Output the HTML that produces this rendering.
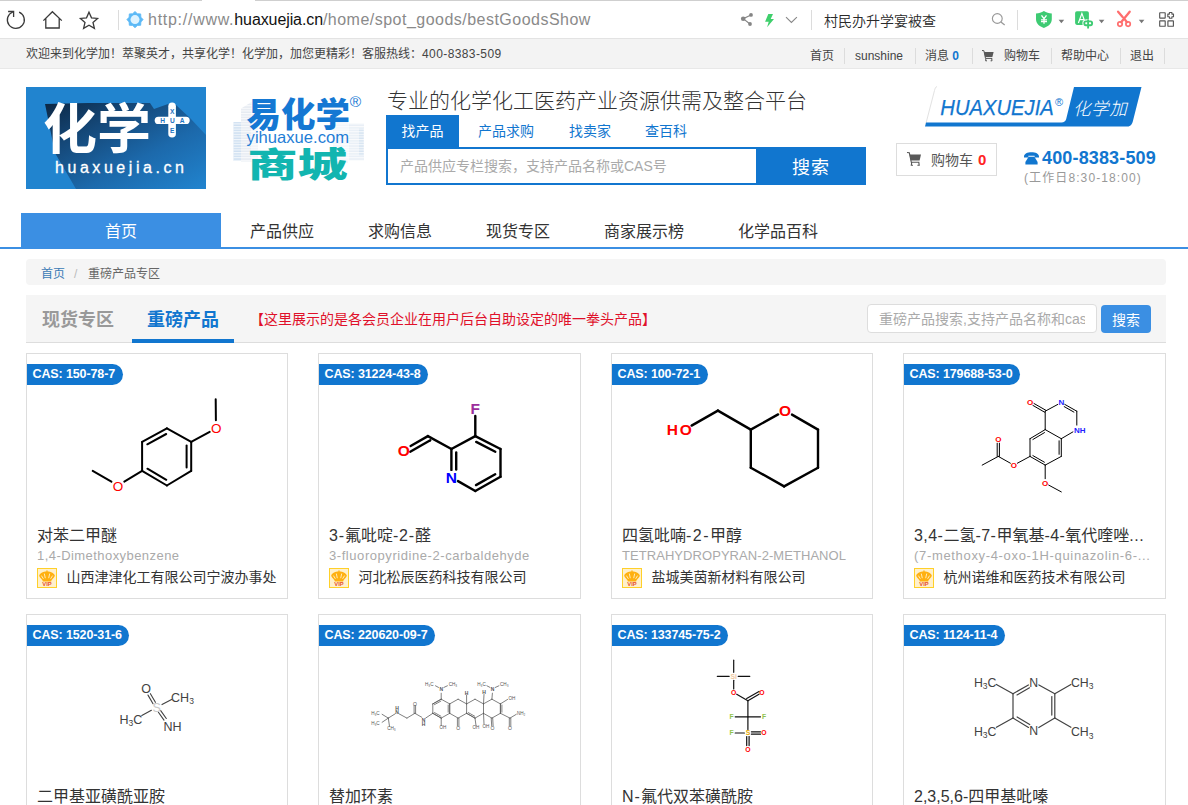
<!DOCTYPE html>
<html lang="zh-CN">
<head>
<meta charset="utf-8">
<title>重磅产品专区 - 化学加</title>
<style>
*{box-sizing:border-box;margin:0;padding:0}
html,body{width:1188px;height:805px;overflow:hidden;background:#fff}
body{font-family:"Liberation Sans","Noto Sans CJK SC",sans-serif;color:#333;font-size:12px;position:relative}
.abs{position:absolute;white-space:nowrap}
.cjk{font-family:"Noto Sans CJK SC","Liberation Sans",sans-serif}
a{color:inherit;text-decoration:none}
/* browser chrome */
#chrome{position:absolute;left:0;top:0;width:1188px;height:39px;background:#fff;border-bottom:1px solid #e3e3e3}
#chrome .topline{position:absolute;left:0;top:0;height:1px;background:#cfcfcf}
#chrome .vsep{position:absolute;top:10px;width:1px;height:20px;background:#dcdcdc}
#url{left:148px;top:9px;font-size:16px;line-height:22px;color:#8a8a8a;letter-spacing:0}
#url b{font-weight:normal;color:#111}
/* top bar */
#topbar{position:absolute;left:0;top:39px;width:1188px;height:30px;background:#f3f3f3;border-bottom:1px solid #e8e8e8}
#topbar .t{position:absolute;top:0;line-height:30px;font-size:12px;color:#444;white-space:nowrap}
#topbar .s{position:absolute;top:9px;width:1px;height:16px;background:#dcdcdc}
/* header */
#logo1{position:absolute;left:26px;top:87px;width:180px;height:102px;background:#2184cf;overflow:hidden}
#logo2{position:absolute;left:230px;top:87px;width:140px;height:102px;overflow:hidden}
#slogan{left:387px;top:84px;font-size:21px;line-height:30px;color:#333;font-weight:300}
.stab{position:absolute;top:115px;height:32px;line-height:32px;font-size:14px;color:#1176cf;white-space:nowrap}
#sbox{position:absolute;left:386px;top:147px;width:480px;height:38px;border:2px solid #1176cf;background:#fff}
#sbtn{position:absolute;left:756px;top:147px;width:110px;height:38px;background:#1176cf;color:#fff;font-size:18px;line-height:38px;text-align:center;letter-spacing:1px;padding-left:0px}
#cart{position:absolute;left:896px;top:143px;width:101px;height:33px;border:1px solid #ddd;background:#fff}
/* nav */
#nav{position:absolute;left:0;top:213px;width:1188px;height:36px;border-bottom:2px solid #3b8fe3}
#nav .home{position:absolute;left:21px;top:0;width:200px;height:34px;background:#3b8fe3;color:#fff;text-align:center;line-height:35px;font-size:16px}
#nav .it{position:absolute;top:0;line-height:34px;font-size:16px;color:#333;white-space:nowrap}
/* breadcrumb */
#bc{position:absolute;left:26px;top:259px;width:1140px;height:26px;background:#f5f5f5;border-radius:4px}
#bc span{position:absolute;top:0;line-height:30px;font-size:12px;white-space:nowrap}
/* tabs row */
#tabs{position:absolute;left:26px;top:295px;width:1140px;height:48px;background:#f5f5f5;border-bottom:1px solid #ddd}
#tabs .tb{position:absolute;top:0;line-height:46px;font-size:18px;font-weight:bold;white-space:nowrap}
/* cards */
.card{position:absolute;width:262px;height:246px;border:1px solid #ddd;background:#fff}
.cas{position:absolute;left:0;top:10px;height:21px;line-height:21px;padding:0 7.5px 0 5.5px;background:#1176cf;color:#fff;font-size:12.500px;font-weight:bold;letter-spacing:-.12px;border-radius:0 11px 11px 0;white-space:nowrap}
.card .tt{position:absolute;left:10px;top:170px;font-size:16px;line-height:24px;color:#333;white-space:nowrap}
.card .en{position:absolute;left:10px;top:193px;font-size:13px;line-height:18px;color:#aaa;white-space:nowrap}
.card .co{position:absolute;left:39.500px;top:213px;font-size:14px;line-height:20px;color:#333;white-space:nowrap}
.vip{position:absolute;left:10px;top:214px;width:20px;height:20px;background:#fff0cc;border:1px solid #ffd029}
svg{position:absolute;overflow:visible}
svg text{font-family:"Liberation Sans","Noto Sans CJK SC",sans-serif}
</style>
</head>
<body>
<!-- ===== browser chrome ===== -->
<div id="chrome">
  <div class="topline" style="left:0;width:202px"></div>
  <div class="topline" style="left:255px;width:933px"></div>
  <svg width="1188" height="39" style="left:0;top:0" viewBox="0 0 1188 39" fill="none">
    <!-- refresh -->
    <path d="M19.100 12.100 A8.500 8.500 0 1 1 12.800 12" stroke="#3a3a3a" stroke-width="1.300"/>
    <path d="M8.100 11.500 H13.600 V16.900" stroke="#3a3a3a" stroke-width="1.300"/>
    <!-- home -->
    <path d="M43.400 20.600 L52.400 11.700 L61.800 20.600 M45.800 18.600 V28 H59.200 V18.600" stroke="#3a3a3a" stroke-width="1.300" stroke-linejoin="miter"/>
    <!-- star -->
    <path d="M89 12.2 L91.5 17.8 L97.6 18.4 L93 22.5 L94.4 28.4 L89 25.3 L83.6 28.4 L85 22.5 L80.4 18.4 L86.5 17.8 Z" stroke="#3a3a3a" stroke-width="1.300" stroke-linejoin="miter"/>
    <!-- favicon -->
    <polygon points="135.0,11.5 137.4,13.7 140.7,13.9 140.9,17.2 143.1,19.6 140.9,22.0 140.7,25.3 137.4,25.5 135.0,27.7 132.6,25.5 129.3,25.3 129.1,22.0 126.9,19.6 129.1,17.2 129.3,13.9 132.6,13.7" fill="#5cb9f6" stroke="#5cb9f6" stroke-width=".8" stroke-linejoin="round"/>
    <circle cx="135" cy="19.600" r="4.500" fill="#def3ff"/>
    <!-- share -->
    <g fill="#858585"><circle cx="751" cy="14.900" r="1.900"/><circle cx="743.200" cy="18.700" r="2.300"/><circle cx="750" cy="24" r="1.900"/></g>
    <path d="M751 14.900 L743.200 18.700 L750 24" stroke="#858585" stroke-width="1.100"/>
    <!-- lightning -->
    <path d="M768.300 14.100 H773 L770.700 19.100 H774 L767.100 27.200 L768.700 21.800 H765.100 Z" fill="#3fcf6c"/>
    <!-- chevron -->
    <path d="M786 17.100 L791.400 22.500 L796.900 17.100" stroke="#888" stroke-width="1.100"/>
    <!-- magnifier -->
    <circle cx="997.300" cy="18.500" r="4.900" stroke="#999" stroke-width="1.150"/>
    <path d="M1000.900 22 L1004.700 25" stroke="#999" stroke-width="1.300"/>
    <!-- shield -->
    <path d="M1043.900 11 C1046.300 12.400 1049 13.300 1051.800 13.600 V19.200 C1051.800 23.600 1048.300 26.300 1043.900 27.900 C1039.500 26.300 1036 23.600 1036 19.200 V13.600 C1038.800 13.300 1041.500 12.400 1043.900 11 Z" fill="#3ecb73"/>
    <path d="M1041.500 15.400 L1044 18.700 L1046.500 15.400 M1044 18.700 V23.800 M1041 19.900 H1047 M1041 21.700 H1047" stroke="#fff" stroke-width="1.300"/>
    <path d="M1058.6 19.8 H1064.2 L1061.4 23.2 Z" fill="#777"/>
    <!-- translate -->
    <rect x="1075.100" y="11.200" width="13.800" height="13.700" rx="1.800" fill="#3ecb73"/>
    <path d="M1078.400 23 L1081.900 13.400 L1084.400 20.400 M1079.600 19.700 H1084" stroke="#fff" stroke-width="1.200"/>
    <g stroke="#fff" stroke-width="3.800"><rect x="1084.300" y="21.400" width="7.800" height="3.800" rx="1.600"/><path d="M1088.100 19.600 V28.400"/></g>
    <g stroke="#3ecb73" stroke-width="1.900"><rect x="1084.300" y="21.400" width="7.800" height="3.800" rx="1.600" fill="#fff"/><path d="M1088.100 19.500 V28.500"/></g>
    <path d="M1098.8 19.8 H1104.4 L1101.6 23.2 Z" fill="#777"/>
    <!-- scissors -->
    <path d="M1118.100 11.700 L1122.600 17 M1124.800 19.400 L1127 22.200 M1129.700 11.700 L1121.100 22.200" stroke="#ff6e6e" stroke-width="2.300" stroke-linecap="round"/>
    <circle cx="1120" cy="24.100" r="2.200" stroke="#ff6e6e" stroke-width="1.700"/>
    <circle cx="1128.100" cy="24.100" r="2.200" stroke="#ff6e6e" stroke-width="1.700"/>
    <path d="M1138.800 19.8 H1144.400 L1141.600 23.2 Z" fill="#777"/>
    <!-- grid -->
    <g stroke="#555" stroke-width="1.150">
      <rect x="1159.700" y="12.700" width="5.500" height="5.400" rx=".3"/>
      <rect x="1159.700" y="20.900" width="5.500" height="5.300" rx=".3"/>
      <rect x="1167.900" y="20.900" width="5.500" height="5.300" rx=".3"/>
      <path d="M1169.400 12.500 H1171.900 V14.100 H1173.500 V16.700 H1171.900 V18.300 H1169.400 V16.700 H1167.800 V14.100 H1169.400 Z" stroke-width="1.100" stroke-linejoin="round"/>
    </g>
  </svg>
  <div class="vsep" style="left:118px"></div>
  <div class="vsep" style="left:811px"></div>
  <div class="vsep" style="left:1017px"></div>
  <div class="abs" id="url"><span style="letter-spacing:.73px">http://www.</span><b style="letter-spacing:-.1px">huaxuejia.cn</b><span style="letter-spacing:.48px">/home/spot_goods/bestGoodsShow</span></div>
  <div class="abs cjk" style="left:824px;top:8.500px;font-size:14px;line-height:22px;color:#2a2a2a;font-weight:350">村民办升学宴被查</div>
</div>
<!-- ===== top bar ===== -->
<div id="topbar">
  <div class="t" style="left:26px">欢迎来到化学加！萃聚英才，共享化学！化学加，加您更精彩！客服热线：<span style="letter-spacing:.4px">400-8383-509</span></div>
  <div class="t" style="left:810px;line-height:34px">首页</div><div class="s" style="left:844px"></div>
  <div class="t" style="left:855px;line-height:34px">sunshine</div><div class="s" style="left:915px"></div>
  <div class="t" style="left:925px;line-height:34px">消息 <b style="color:#1176cf">0</b></div><div class="s" style="left:972px"></div>
  <svg width="13" height="12" style="left:982px;top:11px" viewBox="0 0 13 12"><path d="M0 .5 L1.900 .700 L3.500 8.400 H10.200 M3.900 8.400 L3.600 10.800 H5 M9.700 8.400 L10 10.800 H8.600" fill="none" stroke="#555" stroke-width="1"/><path d="M2.100 2 H11.600 L10.400 7 H3.200 Z" fill="#595959"/></svg>
  <div class="t" style="left:1004px;line-height:34px">购物车</div><div class="s" style="left:1051px"></div>
  <div class="t" style="left:1061px;line-height:34px">帮助中心</div><div class="s" style="left:1120px"></div>
  <div class="t" style="left:1130px;line-height:34px">退出</div><div class="s" style="left:1164px"></div>
</div>
<!-- ===== header ===== -->
<div id="logo1">
  <svg width="180" height="102" style="left:0;top:0" viewBox="0 0 180 102">
    <defs><linearGradient id="sh" x1="0" y1="0" x2="1" y2="1"><stop offset="0" stop-color="#0c2744"/><stop offset=".3" stop-color="#15497a"/><stop offset=".62" stop-color="#1c69ab"/><stop offset="1" stop-color="#2184cf"/></linearGradient></defs>
    <path d="M19 17 L62 16 L124 16 L128 22 L142 17 L150 18 L164 31 L180 48 V102 H50 L29 66 Z" fill="url(#sh)"/>
    <text x="17" y="62" font-size="54" font-weight="700" fill="#fff" style="font-family:'Noto Sans CJK SC','Liberation Sans',sans-serif" textLength="108" lengthAdjust="spacingAndGlyphs">化学</text>
    <rect x="128.700" y="29.700" width="35" height="7.400" rx="3.700" fill="#fff"/>
    <rect x="142.300" y="15.500" width="7.600" height="35" rx="3.800" fill="#fff"/>
    <text x="148.800" y="35.900" font-size="6.600" font-weight="bold" fill="#1f74c0" text-anchor="middle" letter-spacing="5">HUA</text>
    <text x="146.100" y="26.500" font-size="6.600" font-weight="bold" fill="#1f74c0" text-anchor="middle">X</text>
    <text x="146.100" y="46.300" font-size="6.600" font-weight="bold" fill="#1f74c0" text-anchor="middle">E</text>
    <text x="29" y="86.300" font-size="16" fill="#fff" letter-spacing="3.550" stroke="#fff" stroke-width=".3">huaxuejia.cn</text>
  </svg>
</div>
<div id="logo2">
  <svg width="140" height="102" style="left:0;top:0" viewBox="0 0 140 102">
    <defs><pattern id="fl" width="4" height="2.600" patternUnits="userSpaceOnUse"><rect width="4" height="1.100" fill="#fff" opacity=".75"/></pattern></defs>
    <g>
      <rect x="3.500" y="35" width="7.500" height="39" fill="#cfe0f1"/>
      <path d="M11 21.500 L21.500 15 V74.500 H11 Z" fill="#e6ebf2"/>
      <path d="M21.500 15 L28 19 V74.500 H21.500 Z" fill="#f1f4f8"/>
      <rect x="103" y="34" width="15" height="42" fill="#f3f6fa"/>
      <rect x="118.500" y="36.500" width="15.500" height="37" fill="#e9eff6"/>
      <rect x="129" y="41.500" width="4.500" height="27" fill="#d6e4f1"/>
      <rect x="3.500" y="15" width="131" height="60" fill="url(#fl)"/>
    </g>
    <text x="16.600" y="40" font-size="34.500" font-weight="900" fill="#1578d3" style="font-family:'Noto Sans CJK SC','Liberation Sans',sans-serif">易化学</text>
    <text x="119.800" y="19.500" font-size="15.500" fill="#1578d3">®</text>
    <text x="16.600" y="56.400" font-size="16.500" fill="#1f7ed6" textLength="102.400" lengthAdjust="spacingAndGlyphs">yihuaxue.com</text>
    <text x="17.500" y="89.800" font-size="34.500" font-weight="900" fill="#12b5b0" style="font-family:'Noto Sans CJK SC','Liberation Sans',sans-serif" textLength="100" lengthAdjust="spacingAndGlyphs">商城</text>
  </svg>
</div>
<div class="abs cjk" id="slogan">专业的化学化工医药产业资源供需及整合平台</div>
<div class="stab" style="left:386px;width:73px;background:#1176cf;color:#fff;text-align:center">找产品</div>
<div class="stab" style="left:478px">产品求购</div>
<div class="stab" style="left:569px">找卖家</div>
<div class="stab" style="left:645px">查百科</div>
<div id="sbox"><div class="abs" style="left:12px;top:0;line-height:34px;font-size:14px;color:#aaa">产品供应专栏搜索，支持产品名称或CAS号</div></div>
<div id="sbtn" class="cjk">搜索</div>
<!-- HUAXUEJIA logo -->
<svg width="220" height="42" style="left:924px;top:86px" viewBox="0 0 220 42">
  <path d="M13 .5 C11.500 1 11 2.500 10.500 4.500 L1.800 38" stroke="#e2e2e2" stroke-width="1" fill="none"/>
  <path d="M2.100 36.400 H137.500 C140 36.400 141.600 35.400 142.200 33 L150 1 H217.500 L208.800 35.400 C207.800 39 206 40.600 202 40.600 H1 Z" fill="#1176cf"/>
  <text x="16.300" y="28.500" font-size="21.500" font-style="italic" fill="#1176cf" stroke="#1176cf" stroke-width=".25" textLength="113.500" lengthAdjust="spacingAndGlyphs">HUAXUEJIA</text>
  <text x="131" y="19.500" font-size="11" fill="#1176cf">®</text>
  <text x="149" y="28.500" font-size="17.500" letter-spacing=".6" font-style="italic" font-weight="300" fill="#fff" style="font-family:'Noto Sans CJK SC','Liberation Sans',sans-serif">化学加</text>
</svg>
<div id="cart">
  <svg width="15" height="15" style="left:10px;top:8px" viewBox="0 0 15 15"><path d="M0 .5 L2.300 .8 L4.300 10.300 H12.400 M4.700 10.300 L4.300 13.200 H6 M11.800 10.300 L12.200 13.200 H10.400" fill="none" stroke="#555" stroke-width="1.100"/><path d="M2.500 2.400 H14 L12.600 8.500 H3.800 Z" fill="#595959"/></svg>
  <div class="abs" style="left:34px;top:0;line-height:31px;font-size:14px;color:#555">购物车 <b style="color:#f22;font-size:15px;padding-left:1px">0</b></div>
</div>
<svg width="15" height="13" style="left:1024px;top:152px" viewBox="0 0 15 13"><path d="M0 4.500 C0 1.600 3.500 .2 7.500 .2 C11.500 .2 15 1.600 15 4.500 V5.600 H10.600 V3.800 H4.400 V5.600 H0 Z" fill="#1176cf"/><path d="M4.600 4.800 H10.400 L13.600 10 V12.600 H1.400 V10 Z" fill="#1176cf"/></svg>
<div class="abs" style="left:1042px;top:147px;font-size:18px;line-height:22px;font-weight:bold;color:#1176cf;letter-spacing:.15px">400-8383-509</div>
<div class="abs" style="left:1024px;top:169px;font-size:12px;line-height:18px;color:#999;letter-spacing:1.100px">(工作日8:30-18:00)</div>
<!-- ===== nav ===== -->
<div id="nav">
  <div class="home cjk">首页</div>
  <div class="it cjk" style="left:250px">产品供应</div>
  <div class="it cjk" style="left:368px">求购信息</div>
  <div class="it cjk" style="left:486px">现货专区</div>
  <div class="it cjk" style="left:604px">商家展示榜</div>
  <div class="it cjk" style="left:738px">化学品百科</div>
</div>
<div id="bc"><span style="left:15px;color:#3b7bb5">首页</span><span style="left:48px;color:#bbb">/</span><span style="left:62px;color:#666">重磅产品专区</span></div>
<div id="tabs">
  <div class="tb cjk" style="left:16px;color:#999">现货专区</div>
  <div class="tb cjk" style="left:121px;color:#1176cf">重磅产品</div>
  <div style="position:absolute;left:106px;top:44px;width:102px;height:4px;background:#1176cf"></div>
  <div class="abs cjk" style="left:224px;top:0;line-height:47px;font-size:14px;color:#e0102a">【这里展示的是各会员企业在用户后台自助设定的唯一拳头产品】</div>
  <div style="position:absolute;left:841px;top:9px;width:230px;height:29px;background:#fff;border:1px solid #ddd;border-radius:4px"><div class="abs" style="left:11px;top:0;line-height:28px;font-size:14px;color:#aaa;width:206px;overflow:hidden">重磅产品搜索,支持产品名称和cas号</div></div>
  <div class="cjk" style="position:absolute;left:1075px;top:10px;width:50px;height:28px;background:#3b8fe3;border-radius:4px;color:#fff;font-size:14px;line-height:29px;text-align:center">搜索</div>
</div>
<!-- ===== cards ===== -->
<div class="card" style="left:26px;top:353px;width:262px"><svg width="261" height="244" style="left:0;top:0" viewBox="0 0 261 244" fill="none" stroke-linecap="round"><line x1="115.1" y1="87.9" x2="139.9" y2="74.3" stroke="#000" stroke-width="2"/><line x1="120.3" y1="90.3" x2="139.2" y2="80" stroke="#000" stroke-width="2"/><line x1="139.9" y1="74.3" x2="164.2" y2="87.9" stroke="#000" stroke-width="2"/><line x1="164.2" y1="87.9" x2="164.2" y2="116.9" stroke="#000" stroke-width="2"/><line x1="159.6" y1="91.4" x2="159.6" y2="113.5" stroke="#000" stroke-width="2"/><line x1="164.2" y1="116.9" x2="139.9" y2="131.5" stroke="#000" stroke-width="2"/><line x1="139.9" y1="131.5" x2="115.1" y2="116.9" stroke="#000" stroke-width="2"/><line x1="139.3" y1="125.8" x2="120.4" y2="114.7" stroke="#000" stroke-width="2"/><line x1="115.1" y1="116.9" x2="115.1" y2="87.9" stroke="#000" stroke-width="2"/><line x1="164.2" y1="87.9" x2="182.7" y2="77.9" stroke="#000" stroke-width="2"/><line x1="188.9" y1="66.3" x2="188.7" y2="45.3" stroke="#000" stroke-width="2"/><line x1="115.1" y1="116.9" x2="97.3" y2="127.6" stroke="#000" stroke-width="2"/><line x1="84.4" y1="127.7" x2="65.7" y2="116.9" stroke="#000" stroke-width="2"/><text x="189.3" y="79.2" font-size="13.5" fill="#f00" text-anchor="middle" font-weight="normal">O</text><text x="90.9" y="136.7" font-size="13.5" fill="#f00" text-anchor="middle" font-weight="normal">O</text></svg><div class="cas">CAS: 150-78-7</div><div class="tt">对苯二甲醚</div><div class="en" style="letter-spacing:0.44px">1,4-Dimethoxybenzene</div><div class="vip"><svg width="18" height="18" style="left:0;top:0" viewBox="0 0 18 18"><path d="M9 1.200 C9.700 1.200 9.900 2 9.500 2.500 C12 2.400 15.800 4 16.800 6.200 C17 7.800 14.800 9.600 13.400 11.400 L13.200 12.400 H4.800 L4.600 11.400 C3.200 9.600 1 7.800 1.200 6.200 C2.200 4 6 2.400 8.500 2.500 C8.100 2 8.300 1.200 9 1.200 Z" fill="#ffb010"/><path d="M6.300 4.600 L7.300 9.200 M11.700 4.600 L10.700 9.200 M3.400 6.600 L5.400 9.800 M14.600 6.600 L12.600 9.800" stroke="#fff0cc" stroke-width=".9" fill="none"/><text x="9" y="17.200" font-size="5.800" font-weight="bold" fill="#e5502a" text-anchor="middle">VIP</text></svg></div><div class="co">山西津津化工有限公司宁波办事处</div></div>
<div class="card" style="left:318px;top:353px;width:263px"><svg width="261" height="244" style="left:0;top:0" viewBox="0 0 261 244" fill="none" stroke-linecap="round"><line x1="156.3" y1="82.1" x2="156.3" y2="62" stroke="#000" stroke-width="2.4"/><line x1="156.3" y1="82.1" x2="181.5" y2="95" stroke="#000" stroke-width="2.4"/><line x1="157.2" y1="87.9" x2="176.3" y2="97.7" stroke="#000" stroke-width="2.4"/><line x1="181.5" y1="95" x2="181.5" y2="122.8" stroke="#000" stroke-width="2.4"/><line x1="181.5" y1="122.8" x2="156.3" y2="137" stroke="#000" stroke-width="2.4"/><line x1="176.2" y1="120.3" x2="157" y2="131.1" stroke="#000" stroke-width="2.4"/><line x1="156.3" y1="137" x2="139" y2="127.1" stroke="#000" stroke-width="2.4"/><line x1="132.4" y1="115.9" x2="132.4" y2="95" stroke="#000" stroke-width="2.4"/><line x1="137.2" y1="115.5" x2="137.2" y2="98.4" stroke="#000" stroke-width="2.4"/><line x1="132.4" y1="95" x2="156.3" y2="82.1" stroke="#000" stroke-width="2.4"/><line x1="132.4" y1="95" x2="108.9" y2="82.1" stroke="#000" stroke-width="2.4"/><line x1="108.9" y1="82.1" x2="91.6" y2="92" stroke="#000" stroke-width="2.4"/><line x1="111.3" y1="86.2" x2="91.2" y2="97.7" stroke="#000" stroke-width="2.4"/><text x="156.3" y="59.6" font-size="15.5" fill="#9c2f9c" text-anchor="middle" font-weight="bold">F</text><text x="132.4" y="129" font-size="15.5" fill="#00f" text-anchor="middle" font-weight="bold">N</text><text x="84.7" y="101.5" font-size="15.5" fill="#f00" text-anchor="middle" font-weight="bold">O</text></svg><div class="cas">CAS: 31224-43-8</div><div class="tt"><span style="letter-spacing:0.84px">3-</span>氟吡啶<span style="letter-spacing:0.84px">-2-</span>醛</div><div class="en" style="letter-spacing:0.56px">3-fluoropyridine-2-carbaldehyde</div><div class="vip"><svg width="18" height="18" style="left:0;top:0" viewBox="0 0 18 18"><path d="M9 1.200 C9.700 1.200 9.900 2 9.500 2.500 C12 2.400 15.800 4 16.800 6.200 C17 7.800 14.800 9.600 13.400 11.400 L13.200 12.400 H4.800 L4.600 11.400 C3.200 9.600 1 7.800 1.200 6.200 C2.200 4 6 2.400 8.500 2.500 C8.100 2 8.300 1.200 9 1.200 Z" fill="#ffb010"/><path d="M6.300 4.600 L7.300 9.200 M11.700 4.600 L10.700 9.200 M3.400 6.600 L5.400 9.800 M14.600 6.600 L12.600 9.800" stroke="#fff0cc" stroke-width=".9" fill="none"/><text x="9" y="17.200" font-size="5.800" font-weight="bold" fill="#e5502a" text-anchor="middle">VIP</text></svg></div><div class="co">河北松辰医药科技有限公司</div></div>
<div class="card" style="left:611px;top:353px;width:262px"><svg width="261" height="244" style="left:0;top:0" viewBox="0 0 261 244" fill="none" stroke-linecap="round"><line x1="180" y1="60.6" x2="206" y2="75.6" stroke="#000" stroke-width="2.4"/><line x1="206" y1="75.6" x2="206" y2="113.7" stroke="#000" stroke-width="2.4"/><line x1="206" y1="113.7" x2="172.1" y2="132.4" stroke="#000" stroke-width="2.4"/><line x1="172.1" y1="132.4" x2="138.8" y2="113.7" stroke="#000" stroke-width="2.4"/><line x1="138.8" y1="113.7" x2="138.8" y2="75.6" stroke="#000" stroke-width="2.4"/><line x1="138.8" y1="75.6" x2="166.1" y2="60.4" stroke="#000" stroke-width="2.4"/><line x1="138.8" y1="75.6" x2="105.9" y2="56.6" stroke="#000" stroke-width="2.4"/><line x1="105.9" y1="56.6" x2="79.6" y2="71.6" stroke="#000" stroke-width="2.4"/><text x="173" y="62.1" font-size="15.5" fill="#f00" text-anchor="middle" font-weight="bold">O</text><text x="67.4" y="81.2" font-size="15.5" fill="#f00" text-anchor="middle" font-weight="bold"><tspan letter-spacing="1.800">H</tspan>O</text></svg><div class="cas">CAS: 100-72-1</div><div class="tt">四氢吡喃<span style="letter-spacing:1.47px">-2-</span>甲醇</div><div class="en" style="letter-spacing:0.06px">TETRAHYDROPYRAN-2-METHANOL</div><div class="vip"><svg width="18" height="18" style="left:0;top:0" viewBox="0 0 18 18"><path d="M9 1.200 C9.700 1.200 9.900 2 9.500 2.500 C12 2.400 15.800 4 16.800 6.200 C17 7.800 14.800 9.600 13.400 11.400 L13.200 12.400 H4.800 L4.600 11.400 C3.200 9.600 1 7.800 1.200 6.200 C2.200 4 6 2.400 8.500 2.500 C8.100 2 8.300 1.200 9 1.200 Z" fill="#ffb010"/><path d="M6.300 4.600 L7.300 9.200 M11.700 4.600 L10.700 9.200 M3.400 6.600 L5.400 9.800 M14.600 6.600 L12.600 9.800" stroke="#fff0cc" stroke-width=".9" fill="none"/><text x="9" y="17.200" font-size="5.800" font-weight="bold" fill="#e5502a" text-anchor="middle">VIP</text></svg></div><div class="co">盐城美茵新材料有限公司</div></div>
<div class="card" style="left:903px;top:353px;width:263px"><svg width="261" height="244" style="left:0;top:0" viewBox="0 0 261 244" fill="none" stroke-linecap="round"><line x1="141.2" y1="75.6" x2="126" y2="84.7" stroke="#000" stroke-width="1"/><line x1="140.5" y1="78.6" x2="128.9" y2="85.5" stroke="#000" stroke-width="1"/><line x1="126" y1="84.7" x2="126" y2="102.4" stroke="#000" stroke-width="1"/><line x1="126" y1="102.4" x2="141.2" y2="111.1" stroke="#000" stroke-width="1"/><line x1="128.9" y1="101.6" x2="140.4" y2="108.2" stroke="#000" stroke-width="1"/><line x1="141.2" y1="111.1" x2="157.3" y2="102.4" stroke="#000" stroke-width="1"/><line x1="157.3" y1="102.4" x2="157.3" y2="84.7" stroke="#000" stroke-width="1"/><line x1="155.1" y1="100.3" x2="155.1" y2="86.8" stroke="#000" stroke-width="1"/><line x1="157.3" y1="84.7" x2="141.2" y2="75.6" stroke="#000" stroke-width="1"/><line x1="141.2" y1="75.6" x2="141.2" y2="57.2" stroke="#000" stroke-width="1"/><line x1="141.2" y1="57.2" x2="153.8" y2="50.4" stroke="#000" stroke-width="1"/><line x1="160.8" y1="50.4" x2="172.8" y2="57.2" stroke="#000" stroke-width="1"/><line x1="160.2" y1="52.6" x2="169.9" y2="58.1" stroke="#000" stroke-width="1"/><line x1="172.8" y1="57.2" x2="172.8" y2="71.1" stroke="#000" stroke-width="1"/><line x1="168.9" y1="77.9" x2="157.3" y2="84.7" stroke="#000" stroke-width="1"/><line x1="141.7" y1="56.2" x2="130" y2="49.5" stroke="#000" stroke-width="1"/><line x1="140.6" y1="58.2" x2="128.9" y2="51.4" stroke="#000" stroke-width="1"/><line x1="126" y1="102.4" x2="113.4" y2="109.2" stroke="#000" stroke-width="1"/><line x1="106.4" y1="109.2" x2="94.3" y2="102.4" stroke="#000" stroke-width="1"/><line x1="95.4" y1="102.4" x2="95.4" y2="89.2" stroke="#000" stroke-width="1"/><line x1="93.2" y1="102.4" x2="93.2" y2="89.2" stroke="#000" stroke-width="1"/><line x1="94.3" y1="102.4" x2="78.2" y2="111.1" stroke="#000" stroke-width="1"/><line x1="141.2" y1="111.1" x2="141.2" y2="124.7" stroke="#000" stroke-width="1"/><line x1="144.7" y1="131.1" x2="157.3" y2="137.9" stroke="#000" stroke-width="1"/><text x="126" y="51.4" font-size="8" fill="#f00" text-anchor="middle" font-weight="bold">O</text><text x="157.3" y="51.4" font-size="8" fill="#22f" text-anchor="middle" font-weight="bold">N</text><text x="175.7" y="78.5" font-size="8" fill="#22f" text-anchor="middle" font-weight="bold">NH</text><text x="109.8" y="114" font-size="8" fill="#f00" text-anchor="middle" font-weight="bold">O</text><text x="94.3" y="87.5" font-size="8" fill="#f00" text-anchor="middle" font-weight="bold">O</text><text x="141.2" y="132.1" font-size="8" fill="#f00" text-anchor="middle" font-weight="bold">O</text></svg><div class="cas">CAS: 179688-53-0</div><div class="tt"><span style="letter-spacing:0.46px">3,4-</span>二氢<span style="letter-spacing:0.46px">-7-</span>甲氧基<span style="letter-spacing:0.46px">-4-</span>氧代喹唑<span style="letter-spacing:0.46px">...</span></div><div class="en" style="letter-spacing:0.67px">(7-methoxy-4-oxo-1H-quinazolin-6-...</div><div class="vip"><svg width="18" height="18" style="left:0;top:0" viewBox="0 0 18 18"><path d="M9 1.200 C9.700 1.200 9.900 2 9.500 2.500 C12 2.400 15.800 4 16.800 6.200 C17 7.800 14.800 9.600 13.400 11.400 L13.200 12.400 H4.800 L4.600 11.400 C3.200 9.600 1 7.800 1.200 6.200 C2.200 4 6 2.400 8.500 2.500 C8.100 2 8.300 1.200 9 1.200 Z" fill="#ffb010"/><path d="M6.300 4.600 L7.300 9.200 M11.700 4.600 L10.700 9.200 M3.400 6.600 L5.400 9.800 M14.600 6.600 L12.600 9.800" stroke="#fff0cc" stroke-width=".9" fill="none"/><text x="9" y="17.200" font-size="5.800" font-weight="bold" fill="#e5502a" text-anchor="middle">VIP</text></svg></div><div class="co">杭州诺维和医药技术有限公司</div></div>
<div class="card" style="left:26px;top:614px;width:262px"><svg width="261" height="244" style="left:0;top:0" viewBox="0 0 261 244" fill="none" stroke-linecap="round"><line x1="128.4" y1="87.3" x2="123.4" y2="78.7" stroke="#424242" stroke-width="1.1"/><line x1="126" y1="88.7" x2="121" y2="80.1" stroke="#424242" stroke-width="1.1"/><line x1="131.4" y1="97.3" x2="137" y2="105.1" stroke="#424242" stroke-width="1.1"/><line x1="133.7" y1="95.6" x2="139.3" y2="103.5" stroke="#424242" stroke-width="1.1"/><line x1="135" y1="89.6" x2="144.6" y2="84.4" stroke="#424242" stroke-width="1.1"/><line x1="124.4" y1="95.3" x2="114.8" y2="100.6" stroke="#424242" stroke-width="1.1"/><text x="129.7" y="96.9" font-size="12.5" fill="#c8c8c8" text-anchor="middle" font-weight="normal">S</text><text x="119" y="78.2" font-size="12.5" fill="#424242" text-anchor="middle" font-weight="normal">O</text><text x="144.1" y="86.9" font-size="12.5" fill="#424242" text-anchor="start" font-weight="normal">CH<tspan font-size="8.500" dy="2.500">3</tspan></text><text x="115.3" y="108.8" font-size="12.5" fill="#424242" text-anchor="end" font-weight="normal">H<tspan font-size="8.500" dy="2.500">3</tspan><tspan dy="-2.500">C</tspan></text><text x="136.4" y="116.3" font-size="12.5" fill="#424242" text-anchor="start" font-weight="normal">NH</text></svg><div class="cas">CAS: 1520-31-6</div><div class="tt">二甲基亚磺酰亚胺</div></div>
<div class="card" style="left:318px;top:614px;width:263px"><svg width="261" height="244" style="left:0;top:0" viewBox="0 0 261 244" fill="none" stroke-linecap="round"><line x1="122.2" y1="84.2" x2="130.7" y2="88.9" stroke="#555" stroke-width="0.75"/><line x1="130.7" y1="88.9" x2="130.7" y2="98.3" stroke="#555" stroke-width="0.75"/><line x1="130.7" y1="98.3" x2="122.2" y2="103.1" stroke="#555" stroke-width="0.75"/><line x1="122.2" y1="103.1" x2="113.8" y2="98.3" stroke="#555" stroke-width="0.75"/><line x1="113.8" y1="98.3" x2="113.8" y2="88.9" stroke="#555" stroke-width="0.75"/><line x1="113.8" y1="88.9" x2="122.2" y2="84.2" stroke="#555" stroke-width="0.75"/><line x1="139.1" y1="84.2" x2="147.6" y2="88.9" stroke="#555" stroke-width="0.75"/><line x1="147.6" y1="88.9" x2="147.6" y2="98.3" stroke="#555" stroke-width="0.75"/><line x1="147.6" y1="98.3" x2="139.1" y2="103.1" stroke="#555" stroke-width="0.75"/><line x1="139.1" y1="103.1" x2="130.7" y2="98.3" stroke="#555" stroke-width="0.75"/><line x1="130.7" y1="88.9" x2="139.1" y2="84.2" stroke="#555" stroke-width="0.75"/><line x1="156" y1="84.2" x2="164.5" y2="88.9" stroke="#555" stroke-width="0.75"/><line x1="164.5" y1="88.9" x2="164.5" y2="98.3" stroke="#555" stroke-width="0.75"/><line x1="164.5" y1="98.3" x2="156" y2="103.1" stroke="#555" stroke-width="0.75"/><line x1="156" y1="103.1" x2="147.6" y2="98.3" stroke="#555" stroke-width="0.75"/><line x1="147.6" y1="88.9" x2="156" y2="84.2" stroke="#555" stroke-width="0.75"/><line x1="172.9" y1="84.2" x2="181.4" y2="88.9" stroke="#555" stroke-width="0.75"/><line x1="181.4" y1="88.9" x2="181.4" y2="98.3" stroke="#555" stroke-width="0.75"/><line x1="181.4" y1="98.3" x2="172.9" y2="103.1" stroke="#555" stroke-width="0.75"/><line x1="172.9" y1="103.1" x2="164.4" y2="98.3" stroke="#555" stroke-width="0.75"/><line x1="164.4" y1="88.9" x2="172.9" y2="84.2" stroke="#555" stroke-width="0.75"/><line x1="113.8" y1="88.9" x2="122.2" y2="84.2" stroke="#555" stroke-width="0.75"/><line x1="115.5" y1="89.6" x2="121.9" y2="86.1" stroke="#555" stroke-width="0.75"/><line x1="122.2" y1="103.1" x2="113.8" y2="98.3" stroke="#555" stroke-width="0.75"/><line x1="121.9" y1="101.2" x2="115.5" y2="97.6" stroke="#555" stroke-width="0.75"/><line x1="130.7" y1="88.9" x2="130.7" y2="98.3" stroke="#555" stroke-width="0.75"/><line x1="129.2" y1="90" x2="129.2" y2="97.2" stroke="#555" stroke-width="0.75"/><line x1="156" y1="103.1" x2="147.6" y2="98.3" stroke="#555" stroke-width="0.75"/><line x1="155.7" y1="101.2" x2="149.3" y2="97.6" stroke="#555" stroke-width="0.75"/><line x1="181.4" y1="88.9" x2="181.4" y2="98.3" stroke="#555" stroke-width="0.75"/><line x1="182.9" y1="90" x2="182.9" y2="97.2" stroke="#555" stroke-width="0.75"/><line x1="122.2" y1="84.2" x2="122.2" y2="78.2" stroke="#555" stroke-width="0.75"/><line x1="119.5" y1="72.4" x2="116.5" y2="70.8" stroke="#555" stroke-width="0.75"/><line x1="124.9" y1="72.4" x2="128.4" y2="70.8" stroke="#555" stroke-width="0.75"/><text x="122.2" y="76.3" font-size="5" fill="#555" text-anchor="middle" font-weight="bold">N</text><text x="110.3" y="71.2" font-size="4.6" fill="#555" text-anchor="middle" font-weight="normal">H₃C</text><text x="133.9" y="71.2" font-size="4.6" fill="#555" text-anchor="middle" font-weight="normal">CH₃</text><line x1="172.9" y1="84.2" x2="173.4" y2="78.2" stroke="#555" stroke-width="0.75"/><line x1="171" y1="72.4" x2="167.9" y2="70.8" stroke="#555" stroke-width="0.75"/><line x1="176.4" y1="72.4" x2="179.9" y2="70.8" stroke="#555" stroke-width="0.75"/><text x="173.6" y="76.3" font-size="5" fill="#555" text-anchor="middle" font-weight="bold">N</text><text x="162.5" y="71.2" font-size="4.6" fill="#555" text-anchor="middle" font-weight="normal">H₃C</text><text x="185.3" y="71.2" font-size="4.6" fill="#555" text-anchor="middle" font-weight="normal">CH₃</text><text x="147.6" y="80" font-size="5" fill="#555" text-anchor="middle" font-weight="bold">H</text><text x="165" y="79.3" font-size="5" fill="#555" text-anchor="middle" font-weight="bold">H</text><line x1="147.6" y1="88.9" x2="147.6" y2="80" stroke="#555" stroke-width="0.75"/><line x1="164.5" y1="88.9" x2="165" y2="79.5" stroke="#555" stroke-width="0.75"/><line x1="122.2" y1="103.1" x2="122.2" y2="110.5" stroke="#555" stroke-width="0.75"/><text x="123.9" y="114.4" font-size="4.6" fill="#555" text-anchor="middle" font-weight="normal">OH</text><line x1="138.4" y1="103.1" x2="138.4" y2="110.8" stroke="#555" stroke-width="0.75"/><line x1="139.9" y1="103.1" x2="139.9" y2="110.8" stroke="#555" stroke-width="0.75"/><text x="139.1" y="114.8" font-size="5" fill="#555" text-anchor="middle" font-weight="normal">O</text><line x1="156" y1="103.1" x2="157" y2="110.5" stroke="#555" stroke-width="0.75"/><text x="157" y="114.4" font-size="4.6" fill="#555" text-anchor="middle" font-weight="normal">OH</text><line x1="164.5" y1="98.3" x2="165" y2="108.8" stroke="#555" stroke-width="0.75"/><text x="166.9" y="112.9" font-size="4.6" fill="#555" text-anchor="middle" font-weight="normal">OH</text><line x1="172.2" y1="103.1" x2="172.7" y2="110.8" stroke="#555" stroke-width="0.75"/><line x1="173.7" y1="103" x2="174.1" y2="110.7" stroke="#555" stroke-width="0.75"/><text x="173.4" y="114.8" font-size="5" fill="#555" text-anchor="middle" font-weight="normal">O</text><line x1="181.4" y1="88.9" x2="188.6" y2="84.4" stroke="#555" stroke-width="0.75"/><text x="193" y="85.3" font-size="4.6" fill="#555" text-anchor="middle" font-weight="normal">OH</text><line x1="181.4" y1="98.3" x2="191" y2="103.1" stroke="#555" stroke-width="0.75"/><line x1="190.3" y1="103.1" x2="190.3" y2="111" stroke="#555" stroke-width="0.75"/><line x1="191.8" y1="103.1" x2="191.8" y2="111" stroke="#555" stroke-width="0.75"/><text x="191" y="115.1" font-size="5" fill="#555" text-anchor="middle" font-weight="normal">O</text><line x1="191" y1="103.1" x2="197.3" y2="99.3" stroke="#555" stroke-width="0.75"/><text x="202.2" y="100.3" font-size="4.6" fill="#555" text-anchor="middle" font-weight="normal">NH₂</text><line x1="113.8" y1="98.3" x2="106.6" y2="103.1" stroke="#555" stroke-width="0.75"/><text x="104.6" y="106.6" font-size="5" fill="#555" text-anchor="middle" font-weight="bold">N</text><text x="104.6" y="110.6" font-size="5" fill="#555" text-anchor="middle" font-weight="bold">H</text><line x1="102.8" y1="102.3" x2="95.9" y2="98.3" stroke="#555" stroke-width="0.75"/><line x1="96.6" y1="98.3" x2="96.6" y2="90.6" stroke="#555" stroke-width="0.75"/><line x1="95.1" y1="98.3" x2="95.1" y2="90.6" stroke="#555" stroke-width="0.75"/><text x="95.9" y="90.5" font-size="5" fill="#555" text-anchor="middle" font-weight="normal">O</text><line x1="95.9" y1="98.3" x2="87.9" y2="103.1" stroke="#555" stroke-width="0.75"/><line x1="87.9" y1="103.1" x2="80" y2="98.8" stroke="#555" stroke-width="0.75"/><text x="78" y="99.2" font-size="5" fill="#555" text-anchor="middle" font-weight="bold">N</text><text x="78" y="95.4" font-size="5" fill="#555" text-anchor="middle" font-weight="bold">H</text><line x1="76.2" y1="98.8" x2="69.3" y2="103.1" stroke="#555" stroke-width="0.75"/><line x1="69.3" y1="103.1" x2="63.1" y2="99.3" stroke="#555" stroke-width="0.75"/><line x1="69.3" y1="103.1" x2="63.1" y2="107.3" stroke="#555" stroke-width="0.75"/><line x1="69.3" y1="103.1" x2="70.5" y2="111.3" stroke="#555" stroke-width="0.75"/><text x="56.4" y="100.3" font-size="4.6" fill="#555" text-anchor="middle" font-weight="normal">H₃C</text><text x="56.4" y="110.4" font-size="4.6" fill="#555" text-anchor="middle" font-weight="normal">H₃C</text><text x="72.5" y="115.4" font-size="4.6" fill="#555" text-anchor="middle" font-weight="normal">CH₃</text></svg><div class="cas">CAS: 220620-09-7</div><div class="tt">替加环素</div></div>
<div class="card" style="left:611px;top:614px;width:262px"><svg width="261" height="244" style="left:0;top:0" viewBox="0 0 261 244" fill="none" stroke-linecap="round"><line x1="121.7" y1="45.2" x2="121.7" y2="57.3" stroke="#111" stroke-width="1.2"/><line x1="105.3" y1="61.3" x2="117.2" y2="61.3" stroke="#111" stroke-width="1.2"/><line x1="126.2" y1="61.3" x2="137.8" y2="61.3" stroke="#111" stroke-width="1.2"/><line x1="121.7" y1="65.3" x2="121.7" y2="74" stroke="#111" stroke-width="1.2"/><line x1="124.7" y1="79.2" x2="135.9" y2="85.7" stroke="#111" stroke-width="1.2"/><line x1="135.9" y1="85.7" x2="147" y2="79.2" stroke="#111" stroke-width="1.2"/><line x1="134.7" y1="83.6" x2="147" y2="76.4" stroke="#111" stroke-width="1.2"/><line x1="135.9" y1="85.7" x2="135.9" y2="101.8" stroke="#111" stroke-width="1.2"/><line x1="123.2" y1="101.8" x2="148.5" y2="101.8" stroke="#111" stroke-width="1.2"/><line x1="135.9" y1="101.8" x2="135.9" y2="114.5" stroke="#111" stroke-width="1.2"/><line x1="123.2" y1="118" x2="132.4" y2="118" stroke="#111" stroke-width="1.2"/><line x1="139.4" y1="119.2" x2="148.5" y2="119.2" stroke="#111" stroke-width="1.2"/><line x1="139.4" y1="116.8" x2="148.5" y2="116.8" stroke="#111" stroke-width="1.2"/><line x1="134.7" y1="121.5" x2="134.7" y2="130.6" stroke="#111" stroke-width="1.2"/><line x1="137.1" y1="121.5" x2="137.1" y2="130.6" stroke="#111" stroke-width="1.2"/><text x="121.7" y="63.8" font-size="6.8" fill="#f0c8a0" text-anchor="middle" font-weight="bold">Si</text><text x="121.7" y="79.9" font-size="6.8" fill="#f00" text-anchor="middle" font-weight="bold">O</text><text x="150" y="79.9" font-size="6.8" fill="#f00" text-anchor="middle" font-weight="bold">O</text><text x="119.7" y="104.3" font-size="6.8" fill="#90c24e" text-anchor="middle" font-weight="bold">F</text><text x="152" y="104.3" font-size="6.8" fill="#90c24e" text-anchor="middle" font-weight="bold">F</text><text x="119.7" y="120.4" font-size="6.8" fill="#90c24e" text-anchor="middle" font-weight="bold">F</text><text x="135.9" y="120.4" font-size="6.8" fill="#e6a800" text-anchor="middle" font-weight="bold">S</text><text x="152" y="120.4" font-size="6.8" fill="#f00" text-anchor="middle" font-weight="bold">O</text><text x="135.9" y="136.6" font-size="6.8" fill="#f00" text-anchor="middle" font-weight="bold">O</text></svg><div class="cas">CAS: 133745-75-2</div><div class="tt"><span style="letter-spacing:1.05px">N-</span>氟代双苯磺酰胺</div></div>
<div class="card" style="left:903px;top:614px;width:263px"><svg width="261" height="244" style="left:0;top:0" viewBox="0 0 261 244" fill="none" stroke-linecap="round"><line x1="109" y1="78.7" x2="124.4" y2="70" stroke="#424242" stroke-width="1.2"/><line x1="113" y1="79.9" x2="125.5" y2="72.8" stroke="#424242" stroke-width="1.2"/><line x1="134.9" y1="69.9" x2="150.8" y2="78.7" stroke="#424242" stroke-width="1.2"/><line x1="150.8" y1="78.7" x2="150.8" y2="103.1" stroke="#424242" stroke-width="1.2"/><line x1="147.8" y1="81.6" x2="147.8" y2="100.1" stroke="#424242" stroke-width="1.2"/><line x1="150.8" y1="103.1" x2="134.8" y2="112.5" stroke="#424242" stroke-width="1.2"/><line x1="124.5" y1="112.4" x2="109" y2="103.1" stroke="#424242" stroke-width="1.2"/><line x1="125.7" y1="109.6" x2="113.1" y2="102" stroke="#424242" stroke-width="1.2"/><line x1="109" y1="103.1" x2="109" y2="78.7" stroke="#424242" stroke-width="1.2"/><line x1="109" y1="78.7" x2="92.4" y2="69.5" stroke="#424242" stroke-width="1.2"/><line x1="150.8" y1="78.7" x2="166.9" y2="69.5" stroke="#424242" stroke-width="1.2"/><line x1="109" y1="103.1" x2="92.4" y2="112.3" stroke="#424242" stroke-width="1.2"/><line x1="150.8" y1="103.1" x2="166.9" y2="112.3" stroke="#424242" stroke-width="1.2"/><text x="129.7" y="71.5" font-size="12.3" fill="#424242" text-anchor="middle" font-weight="normal">N</text><text x="129.7" y="119.9" font-size="12.3" fill="#424242" text-anchor="middle" font-weight="normal">N</text><text x="166.9" y="71.5" font-size="12.3" fill="#424242" text-anchor="start" font-weight="normal">CH<tspan font-size="8.500" dy="2.500">3</tspan></text><text x="166.9" y="121.2" font-size="12.3" fill="#424242" text-anchor="start" font-weight="normal">CH<tspan font-size="8.500" dy="2.500">3</tspan></text><text x="92.4" y="71.5" font-size="12.3" fill="#424242" text-anchor="end" font-weight="normal">H<tspan font-size="8.500" dy="2.500">3</tspan><tspan dy="-2.500">C</tspan></text><text x="92.4" y="120.7" font-size="12.3" fill="#424242" text-anchor="end" font-weight="normal">H<tspan font-size="8.500" dy="2.500">3</tspan><tspan dy="-2.500">C</tspan></text></svg><div class="cas">CAS: 1124-11-4</div><div class="tt">2,3,5,6-四甲基吡嗪</div></div>
</body>
</html>
